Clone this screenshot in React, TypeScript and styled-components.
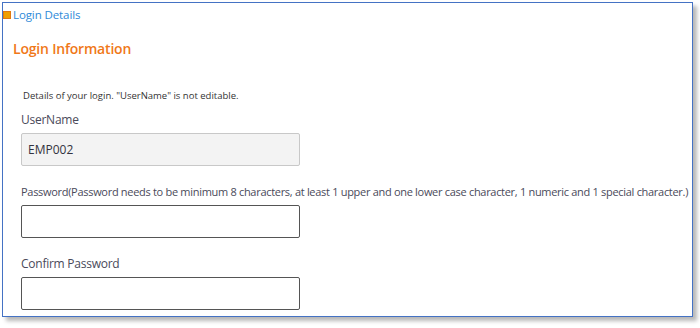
import styled, { createGlobalStyle } from 'styled-components'

const GlobalStyle = createGlobalStyle`
	html, body {
		margin: 0;
		padding: 0;
		background: #ffffff;
	}
	body {
		font-family: 'Open Sans', 'Noto Sans', sans-serif;
	}
`

const Page = styled.div`
	width: 700px;
	height: 328px;
	padding: 2px 0 0 2px;
	box-sizing: border-box;
	overflow: hidden;
`

const Frame = styled.div`
	width: 691px;
	height: 315px;
	box-sizing: border-box;
	border: 1px solid #4472c4;
	box-shadow: 4px 4px 4px rgba(0, 0, 0, 0.28);
	background: #ffffff;
	overflow: hidden;
`

const Crumb = styled.div`
	display: flex;
	align-items: center;
	gap: 2px;
	height: 22px;
	font-size: 11.5px;
	letter-spacing: -0.1px;
	color: #2e8ad8;
`

const CrumbMark = styled.span`
	width: 6px;
	height: 6px;
	margin-top: 1px;
	background: #f0a000;
	border: 1px solid #e07a10;
`

const Section = styled.div`
	padding: 8px 0 0 10px;
`

const Heading = styled.h2`
	margin: 0;
	font-size: 14px;
	font-weight: 600;
	letter-spacing: -0.2px;
	color: #f07818;
	line-height: 32px;
`

const Form = styled.div`
	padding: 23px 0 0 18px;
	display: flex;
	flex-direction: column;
`

const Note = styled.div`
	font-size: 9.5px;
	color: #333333;
	padding-left: 2px;
	line-height: 16px;
`

const Field = styled.div<{ $top: number }>`
	display: flex;
	flex-direction: column;
	margin-top: ${({ $top }) => $top}px;
`

const Label = styled.label<{ $small?: boolean }>`
	font-size: ${({ $small }) => ($small ? 11 : 12)}px;
	color: #4a4a5a;
	line-height: 18px;
	white-space: nowrap;
	letter-spacing: ${({ $small }) => ($small ? -0.3 : -0.25)}px;
`

const Input = styled.input<{ $readOnly?: boolean }>`
	width: 279px;
	height: 33px;
	box-sizing: border-box;
	margin-top: 4px;
	padding: 0 6px;
	font-family: 'Open Sans', 'Noto Sans', sans-serif;
	font-size: 12px;
	color: #333340;
	background: ${({ $readOnly }) => ($readOnly ? '#f3f3f3' : '#ffffff')};
	border: 1px solid ${({ $readOnly }) => ($readOnly ? '#c8c8c8' : '#555555')};
	border-radius: 2px;
	outline: none;
`

export default function App() {
	return (
		<Page>
			<GlobalStyle />
			<Frame>
				<Crumb>
					<CrumbMark />
					<span>Login Details</span>
				</Crumb>
				<Section>
					<Heading>Login Information</Heading>
				</Section>
				<Form>
					<Note>Details of your login. "UserName" is not editable.</Note>
					<Field $top={7}>
						<Label>UserName</Label>
						<Input $readOnly readOnly defaultValue='EMP002' />
					</Field>
					<Field $top={17}>
						<Label $small>
							Password(Password needs to be minimum 8 characters, at least 1 upper and one lower
							case character, 1 numeric and 1 special character.)
						</Label>
						<Input type='password' />
					</Field>
					<Field $top={17}>
						<Label>Confirm Password</Label>
						<Input type='password' />
					</Field>
				</Form>
			</Frame>
		</Page>
	)
}
